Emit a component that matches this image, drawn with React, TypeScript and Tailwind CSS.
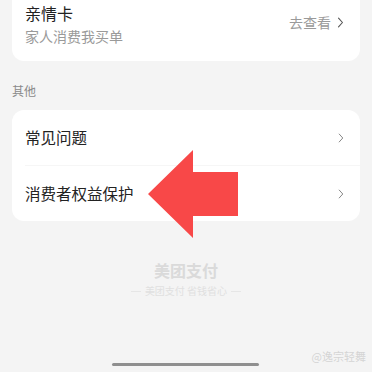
import React from 'react';

const Chevron: React.FC<{ className?: string }> = ({ className }) => (
    <svg viewBox="0 0 8 14" className={className} fill="none" stroke="currentColor" strokeWidth="1.4" strokeLinecap="round" strokeLinejoin="round">
        <path d="M1.5 1.5L6.5 7L1.5 12.5" />
    </svg>
);

const App: React.FC = () => {
    return (
        <div className="relative w-[372px] h-[372px] overflow-hidden bg-[#f4f4f4] font-['Noto_Sans_CJK_SC',sans-serif]">
            {/* 亲情卡 */}
            <div className="mx-3 bg-white rounded-b-xl pl-[13px] pr-[16px] pt-[2px] pb-[15px] flex items-center justify-between">
                <div>
                    <div className="text-[16px] leading-[22px] text-[#222]">亲情卡</div>
                    <div className="mt-[2px] text-[14px] leading-[20px] text-[#9a9a9a]">家人消费我买单</div>
                </div>
                <div className="flex items-center gap-[6px] text-[14px] text-[#9a9a9a] -mt-[4px]">
                    <span>去查看</span>
                    <Chevron className="w-[7px] h-[11px] text-[#555]" />
                </div>
            </div>

            <div className="px-3 mt-[21px] text-[12px] leading-[18px] text-[#8a8a8a]">其他</div>

            <div className="mx-3 mt-[10px] bg-white rounded-xl">
                <div className="h-[55px] flex items-center justify-between pl-[13px] pr-[16px]">
                    <span className="text-[15.5px] text-[#222]">常见问题</span>
                    <Chevron className="w-[6px] h-[10px] text-[#888]" />
                </div>
                <div className="ml-[13px] h-px bg-[#f6f6f6]" />
                <div className="h-[55px] flex items-center justify-between pl-[13px] pr-[16px]">
                    <span className="text-[15.5px] text-[#222]">消费者权益保护</span>
                    <Chevron className="w-[6px] h-[10px] text-[#888]" />
                </div>
            </div>

            <div className="mt-[38px] flex flex-col items-center">
                <div className="text-[16px] leading-[22px] font-bold text-[#dadada]">美团支付</div>
                <div className="mt-[3px] flex items-center gap-[4px] text-[10px] leading-[14px] text-[#e0e0e0]">
                    <span className="w-[10px] h-px bg-[#e6e6e6]" />
                    <span>美团支付 省钱省心</span>
                    <span className="w-[10px] h-px bg-[#e6e6e6]" />
                </div>
            </div>

            {/* watermark */}
            <div className="absolute right-[6px] bottom-[8px] text-[11px] text-[#d4d4d4]">@逸宗轻舞</div>

            {/* home indicator */}
            <div className="absolute left-[112px] top-[363px] w-[147px] h-[3px] rounded-full bg-[#8f8f8f]" />

            {/* red arrow */}
            <svg className="absolute left-0 top-0 w-[372px] h-[372px] pointer-events-none" viewBox="0 0 372 372">
                <polygon points="148,194 193,150 193,172 238,172 238,216 193,216 193,238" fill="#f84848" />
            </svg>
        </div>
    );
};

export default App;
